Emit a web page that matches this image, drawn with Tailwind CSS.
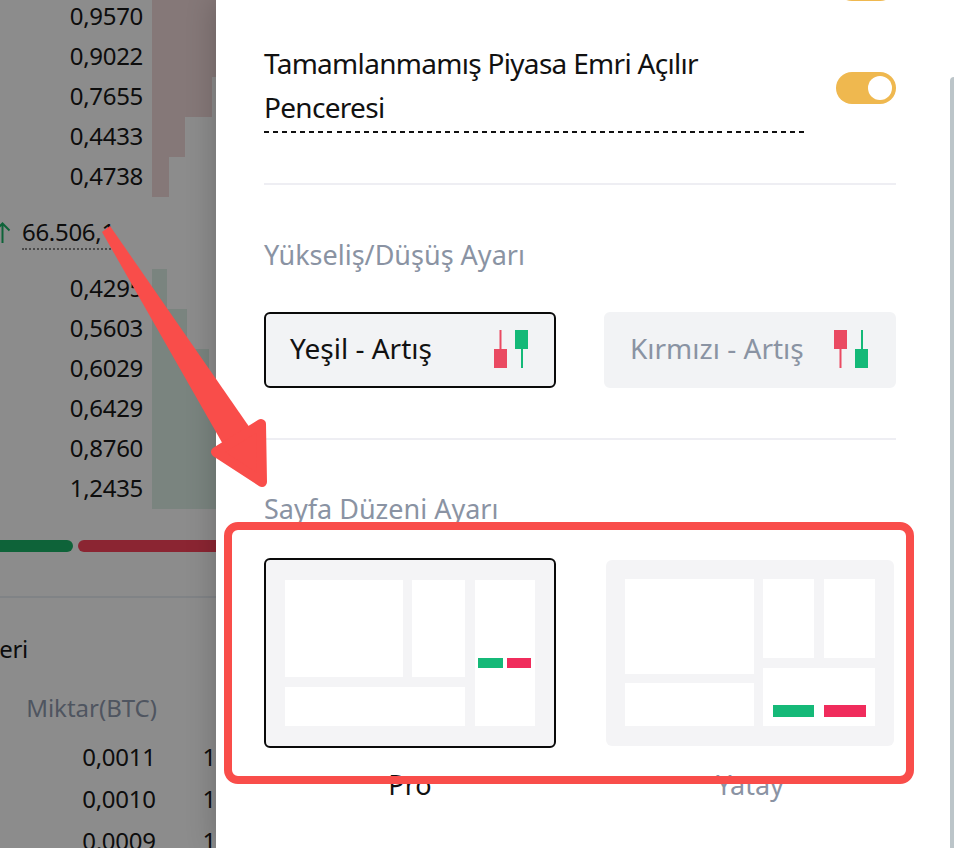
<!DOCTYPE html>
<html lang="tr">
<head>
<meta charset="utf-8">
<script src="https://cdn.jsdelivr.net/npm/@tailwindcss/browser@4"></script>
</head>
<body class="m-0 overflow-hidden bg-white">
<div class="relative flex h-[848px] w-[954px] overflow-hidden font-['Noto_Sans',sans-serif] text-[#111]">

  <!-- dimmed page behind the drawer -->
  <div class="h-full w-[216px] shrink-0 overflow-hidden bg-[#8c8c8c] text-[24px] leading-[38px] tracking-[-0.3px] text-[#0d0d0d]">
    <div class="-mt-[3px] flex h-10"><span class="w-[143px] text-right">0,9570</span><span class="ml-[9px] w-[64px] bg-[#857878]"></span></div>
    <div class="flex h-10"><span class="w-[143px] text-right">0,9022</span><span class="ml-[9px] w-[64px] bg-[#857878]"></span></div>
    <div class="flex h-10"><span class="w-[143px] text-right">0,7655</span><span class="ml-[9px] w-[60px] bg-[#857878]"></span></div>
    <div class="flex h-10"><span class="w-[143px] text-right">0,4433</span><span class="ml-[9px] w-[33px] bg-[#857878]"></span></div>
    <div class="flex h-10"><span class="w-[143px] text-right">0,4738</span><span class="ml-[9px] w-[17px] bg-[#857878]"></span></div>

    <div class="flex h-[72px] items-start pt-[18px]">
      <svg class="mt-[7px] h-[22px] w-[22px] shrink-0" viewBox="0 0 22 22" fill="none" stroke="#0e6339" stroke-width="2"><path d="M2.5 21V1.5M-3.5 7.5L2.5 1.5L9.5 8.5"/></svg>
      <span class="border-b-2 border-dotted border-[#4a4a4a] leading-[33px]">66.506,1</span>
    </div>

    <div class="flex h-10"><span class="w-[143px] text-right">0,4295</span><span class="ml-[9px] w-[15px] bg-[#7a847f]"></span></div>
    <div class="flex h-10"><span class="w-[143px] text-right">0,5603</span><span class="ml-[9px] w-[35px] bg-[#7a847f]"></span></div>
    <div class="flex h-10"><span class="w-[143px] text-right">0,6029</span><span class="ml-[9px] w-[57px] bg-[#7a847f]"></span></div>
    <div class="flex h-10"><span class="w-[143px] text-right">0,6429</span><span class="ml-[9px] w-[64px] bg-[#7a847f]"></span></div>
    <div class="flex h-10"><span class="w-[143px] text-right">0,8760</span><span class="ml-[9px] w-[64px] bg-[#7a847f]"></span></div>
    <div class="flex h-10"><span class="w-[143px] text-right">1,2435</span><span class="ml-[9px] w-[64px] bg-[#7a847f]"></span></div>

    <div class="mt-[31px] flex h-3 gap-[5px]">
      <span class="-ml-4 w-[89px] shrink-0 rounded-full bg-[#0e6339]"></span>
      <span class="w-[160px] shrink-0 rounded-full bg-[#8b2532]"></span>
    </div>
    <div class="mt-[44px] h-[2px] bg-[#808386]"></div>

    <div class="mt-[31px] h-10 w-[28px] leading-10"><span class="float-right">eri</span></div>
    <div class="mt-[20px] flex h-10"><span class="w-[157px] text-right tracking-normal text-[#4f5560]">Miktar(BTC)</span></div>
    <div class="mt-[7px] flex h-[42px] leading-[42px]"><span class="w-[156px] text-right">0,0011</span><span class="ml-[47px]">1</span></div>
    <div class="flex h-[42px] leading-[42px]"><span class="w-[156px] text-right">0,0010</span><span class="ml-[47px]">1</span></div>
    <div class="flex h-[42px] leading-[42px]"><span class="w-[156px] text-right">0,0009</span><span class="ml-[47px]">1</span></div>
  </div>

  <!-- drawer -->
  <div class="relative z-10 flex h-full flex-1 flex-col bg-white pr-[58px] pl-[48px] shadow-[0_0_28px_rgba(0,0,0,0.22)]">
    <div class="-mt-[31px] flex h-8 justify-end">
      <span class="h-8 w-[60px] rounded-full bg-[#efb84f]"></span>
    </div>

    <div class="mt-[40px] flex items-start justify-between">
      <div class="w-[540px] bg-[repeating-linear-gradient(90deg,#111_0_5px,transparent_5px_9.07px)] bg-[length:100%_2px] bg-bottom bg-no-repeat pb-[4px] text-[28px] leading-[44px] tracking-[-0.7px]">Tamamlanmamış Piyasa Emri Açılır Penceresi</div>
      <span class="mt-[31px] flex h-8 w-[60px] items-center justify-end rounded-full bg-[#efb84f] pr-1"><span class="h-6 w-6 rounded-full bg-white"></span></span>
    </div>

    <div class="mt-[50px] h-[2px] bg-[#eeeef3]"></div>

    <div class="mt-[52px] text-[27px] leading-9 text-[#8a93a3]">Yükseliş/Düşüş Ayarı</div>
    <div class="mt-[39px] flex justify-between">
      <div class="flex h-[76px] w-[292px] items-center justify-between rounded-md border-2 border-[#0a0a0a] bg-[#f2f3f5] pr-[26px] pl-[24px] text-[28px]">
        <span class="mb-[5px]">Yeşil - Artış</span>
        <svg class="mb-[2px] h-[38px] w-[34px]" viewBox="0 0 34 38"><rect x="0" y="19" width="13" height="19" fill="#ea4a62"/><rect x="5.5" y="0" width="2" height="19" fill="#ea4a62"/><rect x="21" y="0" width="13" height="19" fill="#14b978"/><rect x="27" y="19" width="2" height="19" fill="#14b978"/></svg>
      </div>
      <div class="flex h-[76px] w-[292px] items-center justify-between rounded-md border-2 border-[#f2f3f5] bg-[#f2f3f5] pr-[26px] pl-[24px] text-[28px] text-[#8a93a3]">
        <span class="mb-[5px]">Kırmızı - Artış</span>
        <svg class="mb-[2px] h-[38px] w-[34px]" viewBox="0 0 34 38"><rect x="0" y="0" width="13" height="19" fill="#ea4a62"/><rect x="5.5" y="19" width="2" height="19" fill="#ea4a62"/><rect x="21" y="19" width="13" height="19" fill="#14b978"/><rect x="27" y="0" width="2" height="19" fill="#14b978"/></svg>
      </div>
    </div>

    <div class="mt-[50px] h-[2px] bg-[#eeeef3]"></div>

    <div class="mt-[51px] text-[27px] leading-9 text-[#8a93a3]">Sayfa Düzeni Ayarı</div>

    <div class="mt-[31px] flex justify-between">
      <div class="w-[292px]">
        <div class="grid h-[190px] grid-cols-[117.5px_53px_60.5px] grid-rows-[97px_39px] gap-x-[9.5px] gap-y-[10px] rounded-md border-2 border-[#0a0a0a] bg-[#f4f4f6] px-[19px] py-[20px]">
          <div class="bg-white"></div>
          <div class="bg-white"></div>
          <div class="row-span-2 flex items-center justify-center gap-1 bg-white pt-[20px]">
            <span class="h-[10px] w-[25px] bg-[#15b978]"></span><span class="h-[10px] w-[24px] bg-[#f02c5c]"></span>
          </div>
          <div class="col-span-2 bg-white"></div>
        </div>
        <div class="mt-[19px] text-center text-[27px] leading-9 text-[#111]">Pro</div>
      </div>
      <div class="w-[292px] px-[2px] pt-[2px]">
        <div class="flex h-[186px] gap-[9px] rounded-md bg-[#f4f4f6] px-[19px] pt-[19px] pb-[20px]">
          <div class="flex w-[129px] flex-col gap-[9px]">
            <div class="h-[95px] bg-white"></div>
            <div class="flex-1 bg-white"></div>
          </div>
          <div class="flex flex-1 flex-col gap-[10px]">
            <div class="flex h-[79px] gap-[10px]">
              <div class="flex-1 bg-white"></div>
              <div class="flex-1 bg-white"></div>
            </div>
            <div class="flex flex-1 items-end justify-between bg-white pr-[9px] pb-[9px] pl-[10px]">
              <span class="h-3 w-[41px] bg-[#15b978]"></span><span class="h-3 w-[42px] bg-[#f02c5c]"></span>
            </div>
          </div>
        </div>
        <div class="mt-[21px] text-center text-[27px] leading-9 text-[#8a93a3]">Yatay</div>
      </div>
    </div>

    <!-- scrollbar -->
    <div class="absolute top-[77px] right-0 bottom-0 w-1 rounded-tl-[4px] bg-[#bcc5c9]"></div>
  </div>

  <!-- annotation overlay -->
  <div class="absolute top-[522px] left-[224px] z-20 h-[262px] w-[690px] rounded-[14px] border-8 border-[#f94d4a]"></div>
  <svg class="absolute top-0 left-0 z-20 h-[848px] w-[954px]" viewBox="0 0 954 848" fill="#f94d4a">
    <polygon points="102,232 110,226 250,428 224,446"/>
    <polygon points="216,452 261,424 262,482" stroke="#f94d4a" stroke-width="10" stroke-linejoin="round"/>
  </svg>
</div>
</body>
</html>
